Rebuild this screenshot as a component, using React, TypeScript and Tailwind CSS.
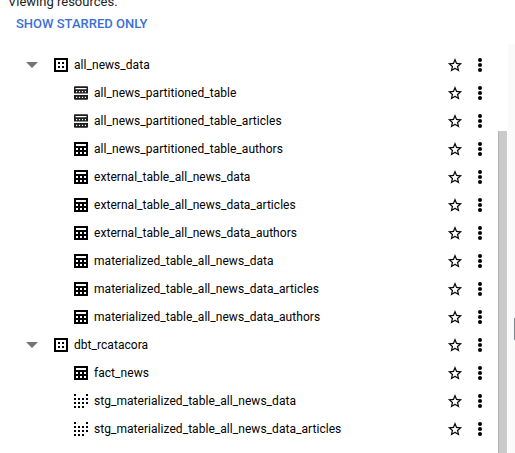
type Kind = 'dataset' | 'partitioned' | 'table' | 'view';

const rows: { kind: Kind; name: string }[] = [
  { kind: 'dataset', name: 'all_news_data' },
  { kind: 'partitioned', name: 'all_news_partitioned_table' },
  { kind: 'partitioned', name: 'all_news_partitioned_table_articles' },
  { kind: 'table', name: 'all_news_partitioned_table_authors' },
  { kind: 'table', name: 'external_table_all_news_data' },
  { kind: 'table', name: 'external_table_all_news_data_articles' },
  { kind: 'table', name: 'external_table_all_news_data_authors' },
  { kind: 'table', name: 'materialized_table_all_news_data' },
  { kind: 'table', name: 'materialized_table_all_news_data_articles' },
  { kind: 'table', name: 'materialized_table_all_news_data_authors' },
  { kind: 'dataset', name: 'dbt_rcatacora' },
  { kind: 'table', name: 'fact_news' },
  { kind: 'view', name: 'stg_materialized_table_all_news_data' },
  { kind: 'view', name: 'stg_materialized_table_all_news_data_articles' },
];

function KindIcon({ kind }: { kind: Kind }) {
  return (
    <svg className="h-3.5 w-3.5 shrink-0" viewBox="0 0 14 14" aria-hidden="true">
      {kind === 'dataset' && (
        <>
          <path d="M1 1h12v12H1z" fill="none" stroke="#000" strokeWidth="2" />
          <path d="M4 4h2v2H4zM8 4h2v2H8zM4 8h2v2H4zM8 8h2v2H8z" />
        </>
      )}
      {kind === 'table' && (
        <path
          fillRule="evenodd"
          d="M0 0h14v14H0zM2 2v2h10V2zM2 6v2h2V6zM6 6v2h2V6zM10 6v2h2V6zM2 10v2h2v-2zM6 10v2h2v-2zM10 10v2h2v-2z"
        />
      )}
      {kind === 'partitioned' && (
        <path
          fill="#1c1c1c"
          fillRule="evenodd"
          d="M1 .3h12q1 0 1 1V7.4H0V1.3q0-1 1-1zM1.5 2v1.3h11V2zM2 5v1.2h1.2V5zM4.9 5v1.2h1.2V5zM7.9 5v1.2h1.2V5zM10.8 5v1.2H12V5zM0 9h14v3.7q0 1-1 1H1q-1 0-1-1zM2 10.8v1.2h1.2v-1.2zM4.9 10.8v1.2h1.2v-1.2zM7.9 10.8v1.2h1.2v-1.2zM10.8 10.8v1.2H12v-1.2z"
        />
      )}
      {kind === 'view' && (
        <path d="M0 0h2v2H0zM12 0h2v2h-2zM0 4h2v2H0zM4 4h2v2H4zM8 4h2v2H8zM12 4h2v2h-2zM0 8h2v2H0zM4 8h2v2H4zM8 8h2v2H8zM12 8h2v2h-2zM0 12h2v2H0zM4 12h2v2H4zM8 12h2v2H8z" />
      )}
    </svg>
  );
}

function ResourceRow({ kind, name }: { kind: Kind; name: string }) {
  const dataset = kind === 'dataset';
  return (
    <div className="flex h-7 items-center pr-4">
      {dataset && (
        <svg className="ml-[26px] mr-4 h-1.5 w-3 shrink-0" viewBox="0 0 12 6" aria-hidden="true">
          <path d="M0 0h12L6 6z" fill="#757575" />
        </svg>
      )}
      <div className={dataset ? 'flex flex-1 items-center gap-1.5' : 'flex flex-1 items-center gap-1.5 pl-[74px]'}>
        <KindIcon kind={kind} />
        <span className="text-xs leading-4 tracking-[0.045px] whitespace-nowrap">{name}</span>
      </div>
      <svg className="h-3.5 w-3.5 shrink-0 overflow-visible" viewBox="2 1.6 20 20" aria-hidden="true">
        <path
          stroke="#000"
          strokeWidth="0.15"
          d="M22 9.24l-7.19-.62L12 2 9.19 8.63 2 9.24l5.46 4.73L5.82 21 12 17.27 18.18 21l-1.63-7.03L22 9.24zM12 15.4l-3.76 2.27 1-4.28-3.32-2.88 4.38-.38L12 6.1l1.71 4.04 4.38.38-3.32 2.88 1 4.28L12 15.4z"
        />
      </svg>
      <svg className="ml-4 h-3.5 w-1 shrink-0" viewBox="0 0 4 14" aria-hidden="true">
        <circle cx="2" cy="2" r="2" />
        <circle cx="2" cy="7" r="2" />
        <circle cx="2" cy="12" r="2" />
      </svg>
    </div>
  );
}

export default function App() {
  return (
    <div className="flex h-[453px] w-[515px] overflow-hidden bg-white font-['Roboto',sans-serif] text-black">
      <div className="w-[498px] shrink-0">
        <div className="flex h-[51px] flex-col">
          <div className="-mt-[7px] pl-2 text-[13px] leading-[18px] text-[#222]">Viewing resources.</div>
          <div className="pt-1 pl-4 text-[13px] leading-[18px] font-medium text-[#3b6fd8]">SHOW STARRED ONLY</div>
        </div>
        {rows.map((row) => (
          <ResourceRow key={row.name} {...row} />
        ))}
      </div>
      <div className="mt-[131px] w-[9px] shrink-0 border-l border-[#b2b2b2] bg-[#cacaca]" />
      <div className="ml-px mt-11 flex flex-1 justify-end bg-[#fafafa]">
        <div className="mt-[274px] h-[22px] w-px bg-[#80868b]" />
      </div>
    </div>
  );
}
